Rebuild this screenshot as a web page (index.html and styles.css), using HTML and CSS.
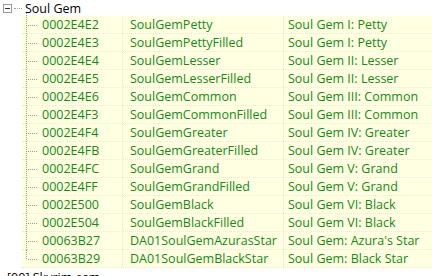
FILE: index.html
```html
<!DOCTYPE html>
<html lang="en">

<head>
    <meta charset="UTF-8">
    <title>Soul Gem</title>
    <link rel="stylesheet" href="styles.css">
</head>

<body>
    <div class="tree">
        <div class="group">
            <span class="toggle"><span class="minus"></span></span>
            <span class="group-name">Soul Gem</span>
        </div>

        <div class="items">
            <div class="row"><span class="branch"></span><span class="c c-id">0002E4E2</span><span class="c c-ed">SoulGemPetty</span><span class="c c-name">Soul Gem I: Petty</span></div>
            <div class="row"><span class="branch"></span><span class="c c-id">0002E4E3</span><span class="c c-ed">SoulGemPettyFilled</span><span class="c c-name">Soul Gem I: Petty</span></div>
            <div class="row"><span class="branch"></span><span class="c c-id">0002E4E4</span><span class="c c-ed">SoulGemLesser</span><span class="c c-name">Soul Gem II: Lesser</span></div>
            <div class="row"><span class="branch"></span><span class="c c-id">0002E4E5</span><span class="c c-ed">SoulGemLesserFilled</span><span class="c c-name">Soul Gem II: Lesser</span></div>
            <div class="row"><span class="branch"></span><span class="c c-id">0002E4E6</span><span class="c c-ed">SoulGemCommon</span><span class="c c-name">Soul Gem III: Common</span></div>
            <div class="row"><span class="branch"></span><span class="c c-id">0002E4F3</span><span class="c c-ed">SoulGemCommonFilled</span><span class="c c-name">Soul Gem III: Common</span></div>
            <div class="row"><span class="branch"></span><span class="c c-id">0002E4F4</span><span class="c c-ed">SoulGemGreater</span><span class="c c-name">Soul Gem IV: Greater</span></div>
            <div class="row"><span class="branch"></span><span class="c c-id">0002E4FB</span><span class="c c-ed">SoulGemGreaterFilled</span><span class="c c-name">Soul Gem IV: Greater</span></div>
            <div class="row"><span class="branch"></span><span class="c c-id">0002E4FC</span><span class="c c-ed">SoulGemGrand</span><span class="c c-name">Soul Gem V: Grand</span></div>
            <div class="row"><span class="branch"></span><span class="c c-id">0002E4FF</span><span class="c c-ed">SoulGemGrandFilled</span><span class="c c-name">Soul Gem V: Grand</span></div>
            <div class="row"><span class="branch"></span><span class="c c-id">0002E500</span><span class="c c-ed">SoulGemBlack</span><span class="c c-name">Soul Gem VI: Black</span></div>
            <div class="row"><span class="branch"></span><span class="c c-id">0002E504</span><span class="c c-ed">SoulGemBlackFilled</span><span class="c c-name">Soul Gem VI: Black</span></div>
            <div class="row"><span class="branch"></span><span class="c c-id">00063B27</span><span class="c c-ed">DA01SoulGemAzurasStar</span><span class="c c-name">Soul Gem: Azura's Star</span></div>
            <div class="row last"><span class="branch"></span><span class="c c-id">00063B29</span><span class="c c-ed">DA01SoulGemBlackStar</span><span class="c c-name">Soul Gem: Black Star</span></div>
        </div>

        <div class="group next">
            <span class="group-name">[00] Skyrim.esm</span>
        </div>
    </div>
</body>

</html>
```

FILE: styles.css
```css
body {
    margin: 0;
    padding: 0;
    background-color: #fff;
    font-family: "Open Sans", "Noto Sans", sans-serif;
    font-size: 12.5px;
    overflow: hidden;
}

.tree {
    width: 432px;
}

.group {
    display: flex;
    align-items: center;
    height: 16px;
    color: #000;
}

.toggle {
    width: 7px;
    height: 7px;
    margin-left: 3px;
    border: 1px solid #9a9a9a;
    display: flex;
    align-items: center;
    justify-content: center;
    background-color: #fff;
}

.minus {
    width: 5px;
    height: 1px;
    background-color: #333;
}

.group-name {
    position: relative;
    margin-left: 13px;
}

.group-name::before {
    content: "";
    position: absolute;
    left: -11px;
    top: 50%;
    width: 8px;
    border-top: 1px dotted #a0a0a0;
}

.next {
    height: 16px;
    margin-top: 1px;
}

.next .group-name {
    margin-left: 7px;
}

.next .group-name::before {
    display: none;
}

.items {
    display: flex;
    flex-direction: column;
}

.row {
    display: flex;
    height: 18px;
    line-height: 18px;
    margin-left: 22px;
    background-color: #ffffe1;
    box-sizing: border-box;
    border-bottom: 1px dotted #ebebcf;
    color: #168a16;
}

.branch {
    width: 18px;
    flex: none;
    position: relative;
}

.branch::before {
    content: "";
    position: absolute;
    left: 4px;
    top: -1px;
    bottom: -1px;
    border-left: 1px dotted #a0a0a0;
}

.row:first-child .branch::before {
    top: -3px;
}

.last .branch::before {
    bottom: 8px;
}

.branch::after {
    content: "";
    position: absolute;
    left: 6px;
    top: 9px;
    width: 9px;
    border-top: 1px dotted #a0a0a0;
}

.c {
    white-space: nowrap;
    overflow: hidden;
    box-sizing: border-box;
}

.c-id {
    width: 82px;
    padding-left: 2px;
}

.c-ed {
    width: 161px;
    padding-left: 7px;
    border-left: 1px dotted #e6e6c4;
}

.c-name {
    flex: 1;
    padding-left: 4px;
    border-left: 1px dotted #e6e6c4;
}
```
